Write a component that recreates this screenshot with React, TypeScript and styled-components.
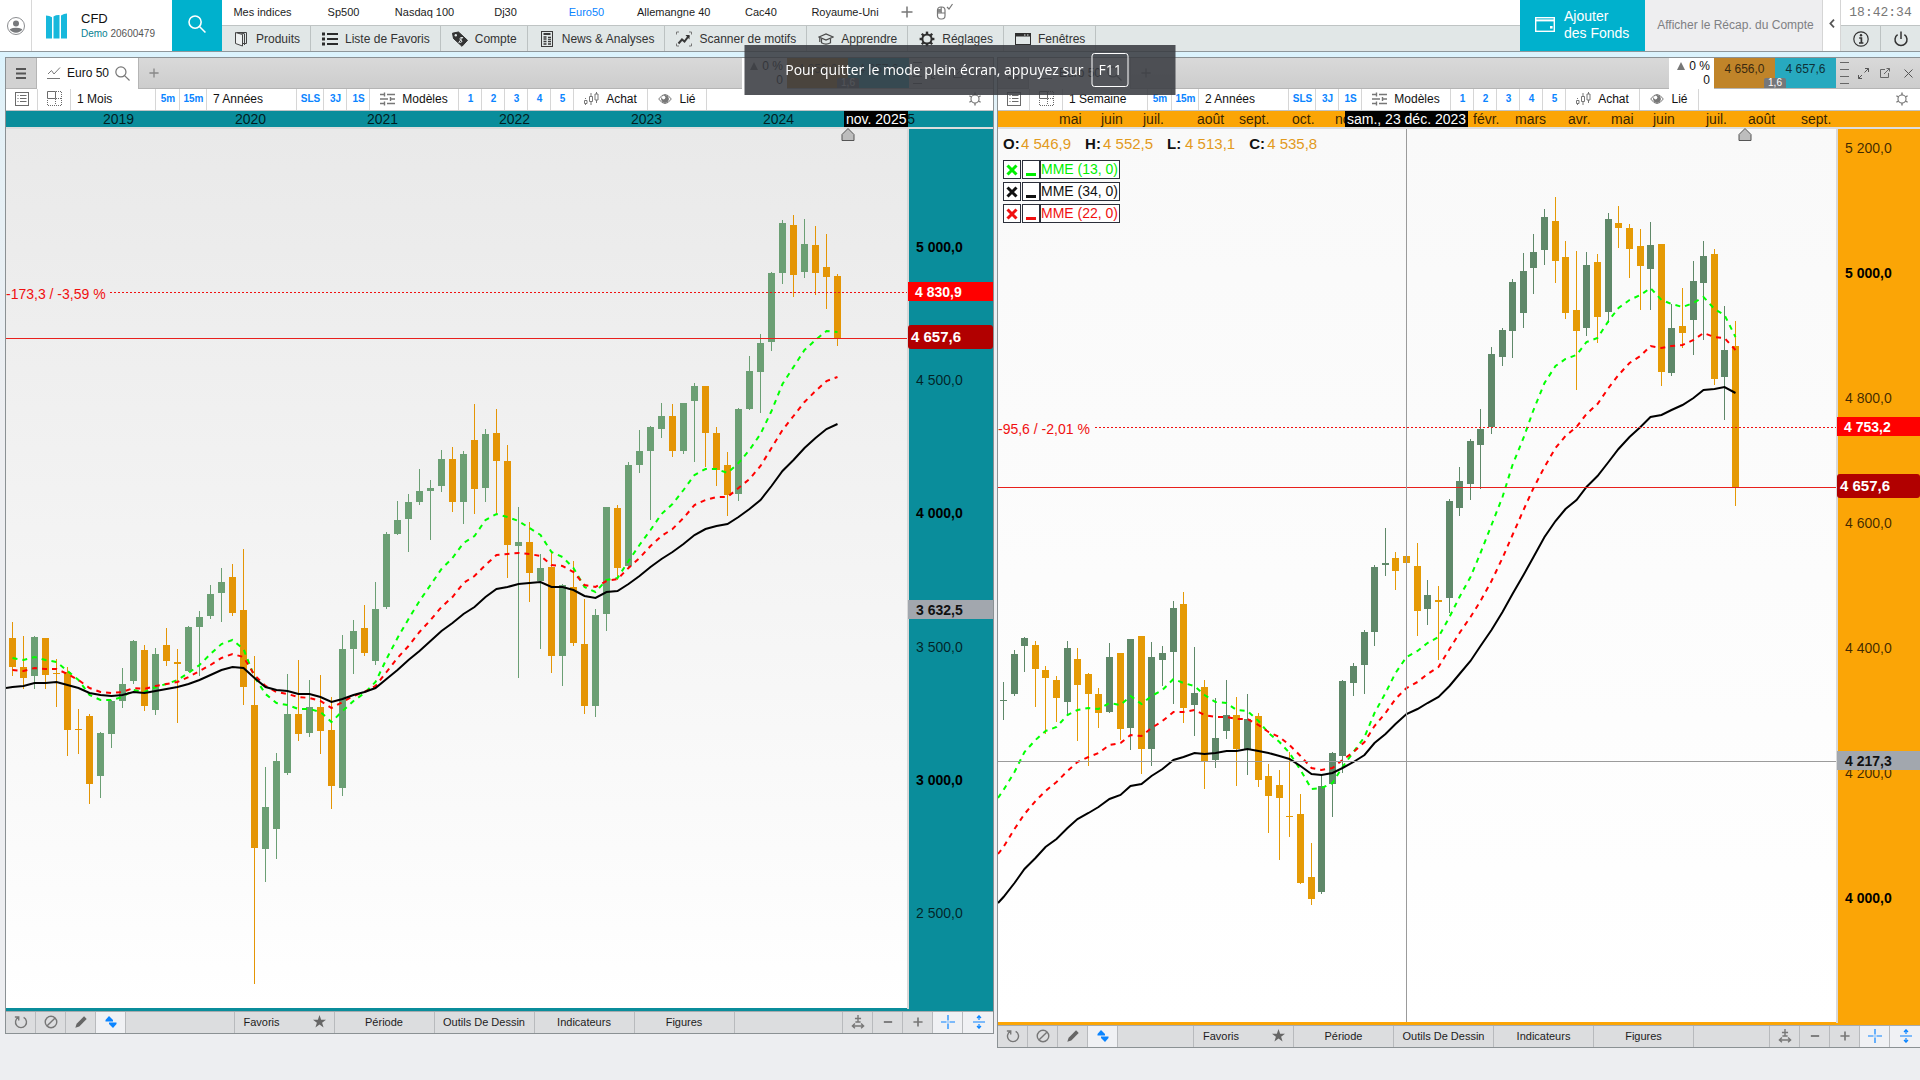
import React from "react";
import styled, { createGlobalStyle, css } from "styled-components";

const TEAL = "#0a8d9b";
const ORANGE = "#fba506";
const CYAN = "#00b1cd";
const BLUE = "#0a84ff";
const FONT = '"Liberation Sans", Arial, sans-serif';

const GlobalStyle = createGlobalStyle`
  *, *::before, *::after { box-sizing: border-box; }
  body {
    margin: 0;
    background: #edeef1;
    font-family: ${FONT};
    font-size: 12px;
    line-height: 14px;
    color: #1c1c1c;
  }
  button {
    margin: 0;
    padding: 0;
    border: 0;
    background: none;
    font: inherit;
    color: inherit;
    white-space: nowrap;
    cursor: pointer;
  }
  svg { display: block; flex: none; }
`;

const Page = styled.div`
  display: flex;
  flex-direction: column;
  min-height: 100vh;
  background: linear-gradient(#dbf3fd 52px, #e4f1f7 120px, #edeef1 420px);
`;

/* ---------- top bar ---------- */

const TopBar = styled.header`
  display: flex;
  height: 52px;
  background: #fff;
  border-bottom: 1px solid #8f979b;
`;

const UserButton = styled.button`
  display: flex;
  align-items: center;
  justify-content: center;
  width: 32px;
  border-right: 1px solid #d8d8d8;
`;

const Brand = styled.div`
  display: flex;
  align-items: center;
  gap: 14px;
  width: 140px;
  padding-left: 14px;
`;

const BrandName = styled.div`
  font-size: 13px;
  line-height: 18px;
  color: #111;
`;

const BrandAccount = styled.div`
  padding-bottom: 2px;
  font-size: 10px;
  line-height: 12px;
  color: #555;

  span {
    color: #087f92;
  }
`;

const SearchButton = styled.button`
  display: flex;
  align-items: center;
  justify-content: center;
  width: 50px;
  padding-bottom: 4px;
  background: ${CYAN};
`;

const Navigation = styled.div`
  display: grid;
  grid-template-rows: 25px 26px;
  flex: 1;
  min-width: 0;
`;

const IndexTabs = styled.nav`
  display: flex;
  align-items: stretch;
  font-size: 11px;
`;

const IndexTab = styled.button<{ $active?: boolean }>`
  min-width: 81px;
  padding: 0 10px 2px;
  color: ${(p) => (p.$active ? BLUE : "#1c1c1c")};
`;

const IconTab = styled.button`
  display: flex;
  align-items: center;
  justify-content: center;
  width: 37px;
  padding-bottom: 1px;
`;

const MenuRow = styled.nav`
  display: flex;
  background: #e1e7e7;
  border-top: 1px solid #bfc4c4;
`;

const MenuItem = styled.button`
  display: flex;
  align-items: center;
  gap: 7px;
  padding: 0 10px 0 11px;
  border-right: 1px solid #bcc2c2;
  color: #333;
`;

const FundsButton = styled.button`
  display: flex;
  align-items: center;
  gap: 9px;
  width: 125px;
  padding: 0 0 2px 15px;
  background: ${CYAN};
  color: #fff;
  font-size: 14px;
  line-height: 17px;
  text-align: left;
`;

const AccountSummary = styled.button`
  width: 177px;
  padding: 0 0 2px 4px;
  background: #eeeef0;
  color: #7e8083;
`;

const CollapseButton = styled.button`
  display: flex;
  align-items: center;
  justify-content: center;
  width: 19px;
  padding-bottom: 4px;
  border-left: 1px solid #d5d5d5;
  border-right: 1px solid #d5d5d5;
`;

const StatusBlock = styled.div`
  display: grid;
  grid-template-rows: 25px 26px;
  width: 79px;
`;

const Clock = styled.time`
  display: flex;
  align-items: center;
  justify-content: center;
  padding-top: 1px;
  font-family: "Liberation Mono", monospace;
  font-size: 13px;
  color: #777;
`;

const StatusButtons = styled.div`
  display: grid;
  grid-template-columns: 1fr 1fr;
  background: #e1e7e7;
  border-top: 1px solid #bfc4c4;
`;

const StatusButton = styled.button`
  display: flex;
  align-items: center;
  justify-content: center;
  padding-left: 2px;
  border-right: 1px solid #bcc2c2;

  &:last-child {
    border-right: 0;
  }
`;

/* ---------- workspace and windows ---------- */

const Workspace = styled.main`
  display: grid;
  grid-template-columns: minmax(0, 989fr) minmax(0, 923fr);
  align-items: start;
  gap: 3px;
  padding: 5px 0 0 5px;
`;

const Window = styled.section<{ $openRight?: boolean }>`
  border: 1px solid #8b9194;
  border-right-width: ${(p) => (p.$openRight ? "0" : "1px")};
  background: #dcdddf;
`;

const TitleBar = styled.div`
  display: flex;
  height: 31px;
  background: linear-gradient(#d9d9d9, #cdcdcd);
  border-bottom: 1px solid #b5b5b5;
`;

const WindowMenu = styled.button`
  display: flex;
  align-items: center;
  justify-content: center;
  width: 31px;
  background: #d2d2d2;
  border-right: 1px solid #b5b5b5;
`;

const ChartTab = styled.div`
  display: flex;
  align-items: center;
  gap: 6px;
  width: 102px;
  height: 31px;
  padding: 0 0 1px 10px;
  background: #fff;
  border-right: 1px solid #b5b5b5;
  color: #111;
`;

const AddTab = styled.button`
  display: flex;
  align-items: center;
  justify-content: center;
  width: 30px;
`;

const TitleSpacer = styled.div`
  flex: 1;
`;

const Variation = styled.div`
  width: 45px;
  height: 31px;
  padding: 1px 4px 0 0;
  background: #fff;
  color: #111;
  text-align: right;
`;

const VariationLine = styled.div`
  display: flex;
  align-items: center;
  justify-content: flex-end;
  gap: 4px;
`;

const Quotes = styled.div`
  position: relative;
  display: flex;
  width: 122px;
`;

const Quote = styled.button<{ $side: "bid" | "ask" }>`
  flex: 1;
  padding-bottom: 8px;
  background: ${(p) => (p.$side === "bid" ? "#c08429" : "#27a9bf")};
  color: ${(p) => (p.$side === "bid" ? "#3a2a10" : "#0e3138")};
`;

const Spread = styled.span`
  position: absolute;
  bottom: 0;
  left: 50%;
  width: 22px;
  margin-left: -11px;
  border-radius: 2px 2px 0 0;
  background: #75777a;
  color: #fff;
  font-size: 10px;
  line-height: 10px;
  text-align: center;
`;

const WindowControls = styled.div`
  display: grid;
  grid-template-columns: 16px 22px 22px 1fr;
  width: 84px;
`;

const ControlButton = styled.button`
  display: flex;
  align-items: center;
  justify-content: center;
`;

const ToolBar = styled.div`
  display: flex;
  height: 22px;
  background: #fff;
  border-bottom: 1px solid #c2c4c6;
`;

const Tool = styled.button<{ $w: number; $kind?: "text" | "short" | "icon" }>`
  display: flex;
  align-items: center;
  justify-content: center;
  gap: 7px;
  width: ${(p) => p.$w}px;
  padding-bottom: 2px;
  border-right: 1px solid #d6d6d6;
  color: #111;
  ${(p) =>
    p.$kind === "text" &&
    css`
      justify-content: flex-start;
      padding-left: 6px;
    `}
  ${(p) =>
    p.$kind === "short" &&
    css`
      padding-left: 1px;
      color: ${BLUE};
      font-size: 10px;
      font-weight: 700;
    `}
`;

const ToolSettings = styled.button`
  display: flex;
  align-items: center;
  margin: 0 11px 0 auto;
  padding-bottom: 1px;
`;

const ChartArea = styled.div`
  position: relative;
`;

const ChartSvg = styled.svg`
  width: 100%;
  height: auto;
  font-family: ${FONT};
  font-size: 14px;
`;

const Legend = styled.div`
  position: absolute;
  top: 24px;
  left: 5px;
`;

const Ohlc = styled.div`
  display: flex;
  gap: 14px;
  margin-bottom: 8px;
  font-size: 15px;
  line-height: 17px;
  color: #e29a1c;
`;

const OhlcItem = styled.span`
  display: flex;
  gap: 1px;

  b {
    min-width: 17px;
    color: #111;
  }
`;

const Indicator = styled.div<{ $color: string }>`
  display: flex;
  height: 19px;
  margin-bottom: 3px;
  color: ${(p) => p.$color};
  font-size: 14px;
  line-height: 17px;
`;

const IndicatorButton = styled.button`
  display: flex;
  align-items: center;
  justify-content: center;
  width: 18px;
  margin-right: 1px;
  border: 1px solid #2b2f3a;
  background: #fff;

  & + & {
    margin-right: 0;
  }
`;

const IndicatorName = styled.span`
  padding-right: 1px;
  border: 1px solid #2b2f3a;
  background: #fff;
`;

const BottomBar = styled.div`
  display: flex;
  height: 21px;
  background: #dcdddf;
  font-size: 11px;
`;

const BottomTool = styled.button<{ $on?: boolean }>`
  display: flex;
  align-items: center;
  justify-content: center;
  width: 30px;
  padding: 0 0 1px 1px;
  background: ${(p) => (p.$on ? "#f0f1f4" : "transparent")};
  border-right: 1px solid #b8babd;

  &:last-child {
    border-right: 0;
  }
`;

const BottomSpacer = styled.div`
  flex: 1;
  border-right: 1px solid #b8babd;
`;

const BottomItem = styled.button<{ $star?: boolean }>`
  display: flex;
  align-items: center;
  justify-content: ${(p) => (p.$star ? "space-between" : "center")};
  width: 100px;
  padding: ${(p) => (p.$star ? "0 8px 2px 9px" : "0 0 2px")};
  border-right: 1px solid #b8babd;
`;

const Toast = styled.div`
  position: fixed;
  top: 45px;
  left: 50%;
  display: flex;
  align-items: center;
  justify-content: center;
  gap: 8px;
  width: 431px;
  height: 50px;
  padding-right: 6px;
  transform: translateX(-50%);
  background: rgba(56, 59, 64, 0.87);
  color: #fff;
  font-family: "Open Sans", "Noto Sans", sans-serif;
  font-size: 14px;
  line-height: 20px;
  white-space: nowrap;
`;

const Key = styled.kbd`
  padding: 6px;
  border: 1px solid #fff;
  border-radius: 3px;
  font: inherit;
`;

/* ---------- icons ---------- */

type IconProps = {
  w?: number;
  h?: number;
  box?: string;
  color?: string;
  sw?: number;
  children: React.ReactNode;
};

const Icon = ({ w = 16, h = 16, box = "0 0 16 16", color = "#777", sw = 1, children }: IconProps) => (
  <svg width={w} height={h} viewBox={box} fill="none" stroke={color} strokeWidth={sw} aria-hidden="true">
    {children}
  </svg>
);

const UserIcon = () => (
  <Icon w={20} h={20} box="0 0 20 20" color="#8b8d90">
    <circle cx="10" cy="10" r="8.5" />
    <circle cx="10" cy="7.5" r="3" fill="#77797c" stroke="none" />
    <path d="M3.6 13.2Q10 10.4 16.4 13.2A7.6 7.6 0 0 1 3.6 13.2Z" fill="#77797c" stroke="none" />
  </Icon>
);

const Logo = () => (
  <Icon w={21} h={26} box="0 0 21 26">
    <g stroke="none" fill="#17b8dc">
      <path d="M0 2.5Q3.5 2.6 6 4.2V25.5H0Z" />
      <path d="M7.5 3.4Q10 1.8 13.5 2V25.5H7.5Z" />
      <path d="M15 2.4Q18 .6 21 .5V25.5H15Z" />
    </g>
  </Icon>
);

const SearchIcon = ({ size, color, sw }: { size: number; color: string; sw: number }) => (
  <Icon w={size} h={size} color={color} sw={sw}>
    <circle cx="6.3" cy="6.3" r="5.4" />
    <path d="M10.2 10.2L15.5 15.5" />
  </Icon>
);

const PlusIcon = ({ size = 12, color = "#777", sw = 1.5 }: { size?: number; color?: string; sw?: number }) => (
  <Icon w={size} h={size} box="0 0 12 12" color={color} sw={sw}>
    <path d="M6 0.5V11.5M0.5 6H11.5" />
  </Icon>
);

const MouseIcon = () => (
  <Icon w={18} h={18} box="0 0 18 18" color="#777" sw={1.2}>
    <rect x="2.5" y="4" width="7.5" height="12" rx="3.2" />
    <path d="M6.2 4V10M2.5 10H10" />
    <path d="M3 6H6V9.6H3Z" fill="#888" stroke="none" />
    <path d="M12 4L14 6L17.5 1" />
  </Icon>
);

const ProductsIcon = () => (
  <Icon color="#444">
    <path d="M3.5 1.5H13.5V12.5H10" />
    <path d="M2.5 1.5L9.5 3.5V15L2.5 12.5Z" fill="#eef1f1" />
    <path d="M5.5 1.5L11.5 2.8V14" />
  </Icon>
);
const ListIcon = () => (
  <Icon color="#2b2b2b" sw={2}>
    <path d="M5 3H16M5 8H16M5 13H16" />
    <path d="M0 3H3M0 8H3M0 13H3" strokeWidth="3" />
  </Icon>
);
const TagIcon = () => (
  <Icon color="#2f2f2f">
    <path d="M.5 2.2L6.5 1L15.5 9.3L10 15.3L1.5 7.5Z" fill="#333" />
    <circle cx="3.8" cy="4.2" r="1.2" fill="#e1e7e7" stroke="none" />
    <path d="M10.5 6.6Q8.6 6 8 7.3T9 9.2T9.6 11Q8.4 12 7 10.8M11 6L6.6 11.6" stroke="#dfe5e5" />
  </Icon>
);
const NewsIcon = () => (
  <Icon color="#3a3a3a">
    <rect x="2.5" y=".5" width="11" height="15" />
    <path d="M4.5 3H11.5" strokeWidth="2" />
    <path d="M4.5 6H7.5M4.5 8H7.5M4.5 10.5H7.5M4.5 13H7.5M9 6.5H12M9 10.5H12M9 13H12" strokeWidth="1.4" />
    <path d="M9 8.4H12" />
  </Icon>
);
const ScannerIcon = () => (
  <Icon color="#3a3a3a">
    <path d="M.5 3.5V1H3M13 1H15.5V3.5M15.5 12.5V15H13M3 15H.5V12.5" stroke="#777" />
    <path d="M2.5 12.5L6 8.5L8.5 10.5L13 4.5" strokeWidth="2" />
    <path d="M9.5 4H13.5V8.5Z" fill="#333" stroke="none" />
  </Icon>
);
const LearnIcon = () => (
  <Icon color="#4a4a4a" sw={1.2}>
    <path d="M1 6L8 3L15 6L8 9Z" />
    <path d="M3.5 7.5V11.8Q8 14.6 12.5 11.8V7.5" />
    <path d="M1.8 6.5V11" />
  </Icon>
);
const GearIcon = ({ size = 16, color = "#2f2f2f", angles }: { size?: number; color?: string; angles?: number[] }) => (
  <Icon w={size} h={size} color={color} sw={angles ? 1.3 : 2}>
    <circle cx="8" cy="8" r="4.6" />
    {(angles ?? [0, 45, 90, 135, 180, 225, 270, 315]).map((a) => (
      <path key={a} d="M8 3.4V.6" strokeWidth={angles ? 1.6 : 2.4} transform={`rotate(${a} 8 8)`} />
    ))}
  </Icon>
);
const WindowIcon = () => (
  <Icon color="#2f2f2f">
    <rect x=".5" y="2.5" width="15" height="11" />
    <path d="M1 4H15" strokeWidth="3" />
    <path d="M9 4H10.5M12 4H13.5" stroke="#e1e7e7" />
  </Icon>
);
const WalletIcon = () => (
  <Icon w={20} h={15} box="0 0 20 15" color="#fff" sw={1.4}>
    <rect x=".7" y=".7" width="18.6" height="13.6" />
    <path d="M1 3.4H19" strokeWidth="2" />
    <path d="M15 9H17.6V11.6H15Z" fill="#fff" stroke="none" />
  </Icon>
);
const InfoIcon = () => (
  <Icon color="#333" sw={1.2}>
    <circle cx="8" cy="8" r="7.2" />
    <path d="M6.2 7H8.4V12M6 12H10.4" strokeWidth="1.7" />
    <circle cx="8" cy="4.2" r="1.2" fill="#333" stroke="none" />
  </Icon>
);
const PowerIcon = () => (
  <Icon color="#333" sw={1.5}>
    <path d="M4.6 3.6A6 6 0 1 0 11.4 3.6" />
    <path d="M8 .5V8" />
  </Icon>
);
const TabChartIcon = () => (
  <Icon w={14} h={14} box="0 0 14 14" color="#777">
    <path d="M1 8L4.5 4.5L7 8L13 1.5M0 12.5H13" />
  </Icon>
);
const ListBoxIcon = () => (
  <Icon w={14} h={14} box="0 0 14 14" color="#6b6b6b">
    <rect x=".5" y=".5" width="13" height="13" />
    <path d="M5 3.5H11.5M5 6.5H11.5M5 9.5H11.5M2.5 3.5H3.5M2.5 6.5H3.5M2.5 9.5H3.5" />
  </Icon>
);
const GridIcon = () => (
  <Icon w={15} h={15} box="0 0 15 15" color="#6b6b6b">
    <path d="M.5 .5H8.5V7.5H.5Z" />
    <path d="M9 .5H14.5V14.5H.5V8M8.5 8V14M9 7.5H14" strokeDasharray="1 1" />
  </Icon>
);
const SlidersIcon = () => (
  <Icon w={15} h={14} box="0 0 15 14" color="#777" sw={1.4}>
    <path d="M0 2.5H4M7 2.5H15M0 7H8M11 7H15M0 11.5H4M7 11.5H15M4.5 .5V4.5M10.5 5V9M4.5 9.5V13.5" />
  </Icon>
);
const CandleIcon = () => (
  <Icon w={15} h={14} box="0 0 15 14" color="#777">
    <path d="M1.5 6V7M1.5 12V13M7 1V4M7 10V13M12.5 0V2M12.5 8V11" />
    <path d="M.5 8.5H3V11.5H.5ZM5.5 4.5H8.5V9.5H5.5ZM11 2H14V8H11Z" />
  </Icon>
);
const EyeIcon = () => (
  <Icon w={14} h={12} box="0 0 14 12" color="#777">
    <path d="M.7 6Q7-3 13.3 6Q7 15 .7 6Z" />
    <circle cx="7" cy="6" r="3.4" fill="#777" />
    <circle cx="5.6" cy="4.6" r="1.8" fill="#fff" stroke="none" />
  </Icon>
);
const BurgerIcon = () => (
  <Icon w={10} h={11} box="0 0 10 11" color="#555" sw={2}>
    <path d="M0 1H10M0 5.5H10M0 10H10" />
  </Icon>
);
const LinesIcon = () => (
  <Icon w={9} h={24} box="0 0 9 24" color="#666">
    <path d="M0 1.5H9M0 8.5H9M0 15.5H9M0 22.5H9" />
  </Icon>
);

/* ---------- chart data ---------- */

type Candle = [kind: "u" | "d", high: number, top: number, bottom: number, low: number];

const parseCandles = (source: string): Candle[] =>
  source
    .trim()
    .split(/\s+/)
    .map((item) => {
      const [kind, ...v] = item.split(",");
      return [kind, ...v.map(Number)] as unknown as Candle;
    });

const monthly = parseCandles(`
d,622,638,667,676 d,636,667,678,689 u,636,637,676,689 d,638,638,675,689 d,659,673,674,707
d,667,672,730,756 d,709,729,730,754 d,714,716,784,804 u,732,733,776,798 u,700,701,734,748
u,668,684,701,708 u,640,641,681,684 d,645,650,706,711 u,648,654,710,715 d,628,645,661,666
d,649,662,664,723 u,626,627,671,672 u,611,617,627,676 u,585,594,616,619 u,568,582,593,622
d,564,577,613,616 d,549,610,687,705 d,656,705,848,984 u,767,807,849,882 u,753,761,829,859
u,674,714,773,775 d,660,714,734,741 u,680,707,733,737 d,675,707,731,754 d,697,730,786,809
u,635,649,788,796 u,620,631,649,674 d,605,628,653,656 u,582,609,661,665 u,532,534,607,609
u,501,520,534,535 u,494,502,519,552 u,469,491,502,505 u,480,488,491,540 u,450,459,486,492
d,447,459,502,512 u,451,454,502,524 d,404,440,489,514 u,429,434,488,502 d,409,433,461,513
d,445,461,545,578 u,507,542,546,678 d,522,542,573,602 u,554,568,581,649 d,552,567,656,673
u,584,585,656,686 d,561,587,643,646 d,599,644,706,714 u,609,615,706,717 u,507,507,614,631
d,505,508,568,580 u,462,465,566,568 u,430,451,465,473 u,426,427,451,520 u,403,416,429,438
d,404,416,451,457 u,403,403,451,454 u,383,386,401,462 d,386,386,433,467 d,427,433,470,486
d,452,465,495,516 u,408,409,494,501 u,356,371,409,410 u,334,343,372,413 u,272,273,342,351
u,220,223,273,284 d,215,225,275,297 u,219,244,272,278 d,226,245,273,295 d,234,267,277,309
d,274,276,338,346
`);

const monthlyAverages = {
  slow: [
    687, 686, 683, 683, 682, 685, 688, 693, 695, 696, 695, 692, 693, 691, 689, 687, 684, 680, 675, 670, 667, 668, 678,
    687, 690, 691, 694, 694, 697, 702, 699, 695, 692, 688, 679, 670, 660, 651, 641, 631, 623, 614, 607, 597, 589, 587,
    584, 583, 582, 587, 587, 590, 596, 598, 592, 591, 584, 576, 567, 559, 552, 544, 535, 529, 526, 524, 517, 509, 500,
    486, 471, 460, 448, 438, 429, 424,
  ],
  middle: [
    670, 671, 668, 669, 669, 674, 680, 688, 692, 693, 692, 688, 689, 686, 684, 682, 677, 671, 665, 658, 654, 657, 675,
    686, 692, 694, 697, 698, 701, 708, 702, 696, 692, 686, 672, 658, 646, 632, 620, 607, 597, 583, 576, 565, 555, 554,
    553, 554, 556, 565, 566, 572, 585, 587, 581, 579, 568, 558, 546, 536, 529, 518, 505, 500, 497, 497, 488, 479, 466,
    448, 430, 416, 402, 391, 381, 377,
  ],
  fast: [
    658, 660, 657, 660, 662, 671, 680, 695, 700, 700, 697, 690, 692, 687, 684, 680, 673, 665, 654, 644, 640, 649, 677,
    694, 703, 705, 709, 709, 712, 722, 711, 701, 693, 682, 659, 638, 619, 601, 585, 569, 558, 543, 536, 520, 514, 517,
    521, 528, 535, 552, 557, 568, 587, 592, 580, 578, 561, 545, 530, 514, 504, 490, 475, 469, 469, 473, 463, 450, 434,
    411, 384, 367, 350, 340, 331, 332,
  ],
};

const weekly = parseCandles(`
u,682,700,701,720 u,650,654,694,696 u,637,638,646,672 d,641,645,669,707 d,666,670,678,734
d,676,680,698,722 u,641,648,702,715 d,648,659,685,741 d,673,674,694,766 d,688,694,713,728
u,643,657,712,713 d,653,653,729,740 u,639,639,728,750 d,636,636,749,774 u,642,657,749,766
u,646,653,660,686 u,601,608,652,704 d,592,604,708,723 u,647,693,705,736 d,680,687,761,789
u,698,738,760,768 u,680,715,731,739 d,697,715,749,786 u,694,719,749,775 d,713,716,780,787
d,764,776,796,833 d,770,785,798,860 d,752,816,817,837 d,794,814,883,884 d,843,877,899,905
u,775,786,892,894 u,752,753,784,817 u,680,681,756,773 u,663,666,683,696 u,630,632,665,694
u,565,567,632,646 u,528,563,565,576 d,552,558,571,590 d,556,556,563,563 d,543,566,611,636
u,580,595,609,625 d,586,600,602,660 u,499,501,598,613 u,467,481,508,516 u,439,441,484,500
u,409,429,445,489 u,347,354,427,434 u,328,330,357,366 u,279,282,331,358 u,253,271,313,328
u,234,252,268,294 u,209,217,250,265 d,197,221,261,283 d,241,257,313,319 d,251,310,331,390
u,252,265,328,336 d,254,262,317,343 u,213,219,312,323 d,206,223,228,248 d,224,228,249,278
d,229,246,266,310 u,222,245,269,310 d,244,244,372,386 u,304,328,373,376 d,288,326,333,348
u,261,281,320,355 u,241,256,283,340 d,249,254,379,385 u,306,350,377,420 d,321,346,487,506
`);

const weeklyAverages = {
  slow: [
    897, 883, 869, 858, 847, 839, 828, 819, 813, 807, 799, 795, 786, 784, 776, 769, 760, 757, 753, 754, 753, 751, 751,
    749, 751, 753, 756, 759, 766, 774, 775, 773, 768, 762, 755, 743, 734, 724, 714, 709, 703, 697, 686, 674, 661, 646,
    630, 612, 594, 575, 557, 537, 521, 509, 500, 487, 476, 462, 449, 437, 427, 417, 415, 410, 405, 398, 390, 389, 387,
    393,
  ],
  middle: [
    847, 829, 814, 801, 791, 782, 771, 762, 757, 753, 745, 743, 735, 736, 728, 721, 712, 712, 710, 715, 717, 717, 719,
    719, 725, 732, 737, 745, 756, 768, 770, 768, 760, 752, 742, 726, 713, 699, 688, 682, 674, 667, 649, 633, 617, 601,
    581, 558, 535, 510, 488, 467, 448, 436, 427, 414, 404, 388, 375, 363, 356, 346, 348, 346, 345, 340, 333, 337, 338,
    350,
  ],
  fast: [
    790, 772, 752, 740, 731, 727, 715, 710, 708, 709, 703, 705, 696, 704, 696, 690, 679, 683, 686, 695, 702, 703, 710,
    711, 721, 733, 742, 753, 770, 789, 788, 783, 767, 752, 737, 713, 693, 673, 657, 651, 643, 637, 617, 597, 577, 553,
    525, 497, 465, 438, 410, 383, 366, 359, 355, 342, 338, 321, 308, 300, 295, 288, 300, 304, 307, 303, 297, 309, 315,
    337,
  ],
};

type Label = [text: string, position: number];

type ChartSpec = {
  id: string;
  label: string;
  left: number;
  right: number;
  plotRight: number;
  plotBottom: number;
  axisColor: string;
  up: string;
  down: string;
  shade: [string, string];
  firstX: number;
  step: number;
  candles: Candle[];
  averages: { slow: number[]; middle: number[]; fast: number[] };
  lead: { slow: number; middle?: number; fast?: number };
  times: Label[];
  timeCursor: { text: string; x: number; width: number };
  marker: number;
  prices: Label[];
  delta: { text: string; line: number; from: number; price: string };
  last: { line: number; price: string };
  cursor: { price: string; y: number; x?: number };
};

const leftChart: ChartSpec = {
  id: "monthly",
  label: "Euro 50, 1 Mois",
  left: 6,
  right: 993,
  plotRight: 907,
  plotBottom: 1008,
  axisColor: TEAL,
  up: "#6b9f74",
  down: "#e49505",
  shade: ["#e9e9e9", "#ffffff"],
  firstX: 12,
  step: 11,
  candles: monthly,
  averages: monthlyAverages,
  lead: { slow: 688 },
  times: [
    ["2019", 103],
    ["2020", 235],
    ["2021", 367],
    ["2022", 499],
    ["2023", 631],
    ["2024", 763],
    ["2025", 884],
  ],
  timeCursor: { text: "nov. 2025", x: 844, width: 64 },
  marker: 848,
  prices: [
    ["5 000,0", 247],
    ["4 500,0", 380],
    ["4 000,0", 513],
    ["3 500,0", 647],
    ["3 000,0", 780],
    ["2 500,0", 913],
  ],
  delta: { text: "-173,3 / -3,59 %", line: 292, from: 110, price: "4 830,9" },
  last: { line: 338, price: "4 657,6" },
  cursor: { price: "3 632,5", y: 610 },
};

const rightChart: ChartSpec = {
  id: "weekly",
  label: "Euro 50, 1 Semaine",
  left: 998,
  right: 1920,
  plotRight: 1836,
  plotBottom: 1022,
  axisColor: ORANGE,
  up: "#5f8869",
  down: "#e59a05",
  shade: ["#f9f9f9", "#ffffff"],
  firstX: 1003.4,
  step: 10.61,
  candles: weekly,
  averages: weeklyAverages,
  lead: { slow: 903, middle: 854, fast: 798 },
  times: [
    ["mai", 1059],
    ["juin", 1101],
    ["juil.", 1143],
    ["août", 1197],
    ["sept.", 1239],
    ["oct.", 1292],
    ["nov.", 1335],
    ["févr.", 1473],
    ["mars", 1515],
    ["avr.", 1568],
    ["mai", 1611],
    ["juin", 1653],
    ["juil.", 1706],
    ["août", 1748],
    ["sept.", 1801],
  ],
  timeCursor: { text: "sam., 23 déc. 2023", x: 1345, width: 123 },
  marker: 1745,
  prices: [
    ["5 200,0", 148],
    ["5 000,0", 273],
    ["4 800,0", 398],
    ["4 600,0", 523],
    ["4 400,0", 648],
    ["4 200,0", 773],
    ["4 000,0", 898],
  ],
  delta: { text: "-95,6 / -2,01 %", line: 427, from: 1095, price: "4 753,2" },
  last: { line: 487, price: "4 657,6" },
  cursor: { price: "4 217,3", y: 761, x: 1406 },
};

const isMajor = (text: string) => /^\d 000/.test(text);

const TOP = 111;
const PLOT_TOP = 129;

const PriceChart = ({ spec }: { spec: ChartSpec }) => {
  const bottom = spec.plotBottom + 4;
  const axisLeft = spec.plotRight + 2;
  const labelX = axisLeft + 7;
  const centre = (i: number) => Math.floor(spec.firstX + spec.step * i) + 0.5;
  const points = (ys: number[], lead?: number) =>
    [...(lead === undefined ? [] : [`${spec.left},${lead}`]), ...ys.map((y, i) => `${centre(i)},${y}`)].join(" ");

  return (
    <ChartSvg
      viewBox={`${spec.left} ${TOP} ${spec.right - spec.left} ${bottom - TOP}`}
      role="img"
      aria-label={spec.label}
    >
      <defs>
        <linearGradient id={spec.id} x1="0" y1="0" x2="0" y2="1">
          <stop offset="0" stopColor={spec.shade[0]} />
          <stop offset="1" stopColor={spec.shade[1]} />
        </linearGradient>
      </defs>
      <rect x={spec.left} y={TOP} width={spec.right - spec.left} height={bottom - TOP} fill={spec.axisColor} />
      <rect
        x={spec.left}
        y={PLOT_TOP}
        width={spec.plotRight - spec.left}
        height={spec.plotBottom - PLOT_TOP}
        fill={`url(#${spec.id})`}
      />
      <rect x={spec.left} y={PLOT_TOP - 2} width={spec.right - spec.left} height={2} fill="#dddddd" />
      <rect x={spec.plotRight} y={PLOT_TOP} width={2} height={spec.plotBottom - PLOT_TOP + 1} fill="#d9d9d9" />
      <rect x={spec.left} y={bottom - 1} width={spec.right - spec.left} height={1} fill="#a7abae" />

      <g shapeRendering="crispEdges">
        {spec.candles.map(([kind, high, top, low, end], i) => {
          const fill = kind === "u" ? spec.up : spec.down;
          const x = centre(i);
          return (
            <g key={i} fill={fill}>
              <rect x={x - 0.5} y={high} width={1} height={end - high} />
              <rect x={x - 3.5} y={top} width={7} height={Math.max(1, low - top)} />
            </g>
          );
        })}
      </g>

      <g fill="none" strokeWidth={2}>
        <polyline points={points(spec.averages.fast, spec.lead.fast)} stroke="#00ff00" strokeDasharray="5 5" />
        <polyline points={points(spec.averages.middle, spec.lead.middle)} stroke="#ff0000" strokeDasharray="5 5" />
        <polyline points={points(spec.averages.slow, spec.lead.slow)} stroke="#000" />
      </g>

      <g shapeRendering="crispEdges">
        <line
          x1={spec.delta.from}
          x2={spec.plotRight}
          y1={spec.delta.line + 0.5}
          y2={spec.delta.line + 0.5}
          stroke="#f01010"
          strokeDasharray="2 2"
        />
        <rect x={spec.left} y={spec.last.line} width={spec.plotRight - spec.left} height={1} fill="#e8201c" />
        {spec.cursor.x !== undefined && (
          <>
            <rect x={spec.cursor.x} y={PLOT_TOP} width={1} height={spec.plotBottom - PLOT_TOP} fill="#9b9b9b" />
            <rect x={spec.left} y={spec.cursor.y} width={spec.plotRight - spec.left} height={1} fill="#9b9b9b" />
          </>
        )}
      </g>
      <text x={spec.left} y={spec.delta.line + 7} fill="#f01010">
        {spec.delta.text}
      </text>

      <g fill="#000" fillOpacity={0.8}>
        {spec.times.map(([text, x], i) => (
          <text key={i} x={x} y={124}>
            {text}
          </text>
        ))}
      </g>
      <rect x={spec.timeCursor.x} y={TOP} width={spec.timeCursor.width} height={16} fill="#000" />
      <text x={spec.timeCursor.x + 2} y={124} fill="#fff">
        {spec.timeCursor.text}
      </text>
      <path
        d={`M${spec.marker} 128.5L${spec.marker + 6} 134.5V140.5H${spec.marker - 6}V134.5Z`}
        fill="#bdbdbd"
        stroke="#555"
      />

      {spec.prices.map(([text, y]) => (
        <text
          key={text}
          x={labelX}
          y={y + 5}
          fill="#000"
          fillOpacity={isMajor(text) ? 1 : 0.75}
          fontWeight={isMajor(text) ? 700 : 400}
        >
          {text}
        </text>
      ))}
      <g fontWeight={700}>
        <rect x={axisLeft - 1} y={spec.cursor.y - 10} width={spec.right - axisLeft + 1} height={19} fill="#a2a7ae" />
        <text x={labelX} y={spec.cursor.y + 5} fill="#111">
          {spec.cursor.price}
        </text>
        <rect x={axisLeft - 1} y={spec.delta.line - 10} width={spec.right - axisLeft + 1} height={19} fill="#ff0000" />
        <text x={labelX - 1} y={spec.delta.line + 5} fill="#fff">
          {spec.delta.price}
        </text>
        <rect
          x={axisLeft - 1}
          y={spec.last.line - 13}
          width={spec.right - axisLeft + 1}
          height={24}
          rx={3}
          fill="#b10000"
        />
        <text x={labelX - 5} y={spec.last.line + 4} fill="#fff" fontSize={15}>
          {spec.last.price}
        </text>
      </g>
    </ChartSvg>
  );
};

/* ---------- window ---------- */

const ohlc: [string, string][] = [
  ["O:", "4 546,9"],
  ["H:", "4 552,5"],
  ["L:", "4 513,1"],
  ["C:", "4 535,8"],
];

const indicators: [string, string][] = [
  ["MME (13, 0)", "#00f000"],
  ["MME (34, 0)", "#111111"],
  ["MME (22, 0)", "#f01010"],
];

const ChartLegend = () => (
  <Legend>
    <Ohlc>
      {ohlc.map(([name, value]) => (
        <OhlcItem key={name}>
          <b>{name}</b>
          {value}
        </OhlcItem>
      ))}
    </Ohlc>
    {indicators.map(([name, color]) => (
      <Indicator key={name} $color={color}>
        <IndicatorButton aria-label={`Supprimer ${name}`}>
          <Icon w={12} h={12} box="0 0 12 12" color="currentColor" sw={3}>
            <path d="M1.5 1.5L10.5 10.5M10.5 1.5L1.5 10.5" />
          </Icon>
        </IndicatorButton>
        <IndicatorButton aria-label={`Réduire ${name}`}>
          <Icon w={12} h={12} box="0 0 12 12" color="currentColor" sw={3}>
            <path d="M1 10.5H11" />
          </Icon>
        </IndicatorButton>
        <IndicatorName>{name}</IndicatorName>
      </Indicator>
    ))}
  </Legend>
);

type WindowProps = {
  spec: ChartSpec;
  period: string;
  range: string;
  legend?: boolean;
  openRight?: boolean;
};

const ChartWindow = ({ spec, period, range, legend, openRight }: WindowProps) => (
  <Window $openRight={openRight}>
    <TitleBar>
      <WindowMenu aria-label="Menu">
        <BurgerIcon />
      </WindowMenu>
      <ChartTab>
        <TabChartIcon />
        Euro 50
        <SearchIcon size={15} color="#777" sw={1.3} />
      </ChartTab>
      <AddTab aria-label="Nouvel onglet">
        <PlusIcon size={10} color="#888" sw={1.6} />
      </AddTab>
      <TitleSpacer />
      <Variation>
        <VariationLine>
          <Icon w={8} h={8} box="0 0 8 8">
            <path d="M4 0L8 8H0Z" fill="#777" stroke="none" />
          </Icon>
          0 %
        </VariationLine>
        <VariationLine>0</VariationLine>
      </Variation>
      <Quotes>
        <Quote $side="bid">4 656,0</Quote>
        <Quote $side="ask">4 657,6</Quote>
        <Spread>1,6</Spread>
      </Quotes>
      <WindowControls>
        <ControlButton aria-label="Options">
          <LinesIcon />
        </ControlButton>
        <ControlButton aria-label="Agrandir">
          <Icon w={11} h={11} box="0 0 11 11" color="#555">
            <path d="M6.5 4.5L10.5 .5M7 .5H10.5V4M4 7L.5 10.5M.5 7V10.5H4" />
          </Icon>
        </ControlButton>
        <ControlButton aria-label="Détacher">
          <Icon w={10} h={10} box="0 0 10 10" color="#666">
            <path d="M5 1.5H.5V9.5H8.5V5M4 6L9.5 .5M6.5 .5H9.5V3.5" />
          </Icon>
        </ControlButton>
        <ControlButton aria-label="Fermer">
          <Icon w={9} h={9} box="0 0 9 9" color="#555">
            <path d="M.5 .5L8.5 8.5M8.5 .5L.5 8.5" />
          </Icon>
        </ControlButton>
      </WindowControls>
    </TitleBar>

    <ToolBar>
      <Tool $w={32} aria-label="Liste">
        <ListBoxIcon />
      </Tool>
      <Tool $w={33} aria-label="Disposition">
        <GridIcon />
      </Tool>
      <Tool $w={85} $kind="text">
        {period}
      </Tool>
      <Tool $w={24} $kind="short">
        5m
      </Tool>
      <Tool $w={27} $kind="short">
        15m
      </Tool>
      <Tool $w={90} $kind="text">
        {range}
      </Tool>
      <Tool $w={27} $kind="short">
        SLS
      </Tool>
      <Tool $w={23} $kind="short">
        3J
      </Tool>
      <Tool $w={23} $kind="short">
        1S
      </Tool>
      <Tool $w={89}>
        <SlidersIcon />
        Modèles
      </Tool>
      {["1", "2", "3", "4", "5"].map((n) => (
        <Tool key={n} $w={23} $kind="short">
          {n}
        </Tool>
      ))}
      <Tool $w={74}>
        <CandleIcon />
        Achat
      </Tool>
      <Tool $w={59}>
        <EyeIcon />
        Lié
      </Tool>
      <ToolSettings aria-label="Paramètres">
        <GearIcon size={14} color="#777" angles={[0, 60, 120, 180, 240, 300]} />
      </ToolSettings>
    </ToolBar>

    <ChartArea>
      <PriceChart spec={spec} />
      {legend && <ChartLegend />}
    </ChartArea>

    <BottomBar>
      <BottomTool aria-label="Actualiser">
        <Icon w={14} h={14} sw={1.6}>
          <path d="M5 2.6A6.3 6.3 0 1 0 11 2.6M1 2.2H5.4V6.4" />
        </Icon>
      </BottomTool>
      <BottomTool aria-label="Masquer">
        <Icon w={14} h={14} sw={1.6}>
          <circle cx="8" cy="8" r="6.6" />
          <path d="M3.6 12.4L12.4 3.6" />
        </Icon>
      </BottomTool>
      <BottomTool aria-label="Dessiner">
        <Icon w={14} h={14}>
          <path d="M1.5 14.5L3 10L11.5 1.5L14.5 4.5L6 13Z" fill="#666" stroke="none" />
        </Icon>
      </BottomTool>
      <BottomTool $on aria-label="Ajuster">
        <Icon w={12} h={12} box="0 0 12 12">
          <path d="M4 0L8 4V5.5H.5V4ZM8 12L4 8V6.5H11.5V8Z" fill={BLUE} stroke="none" />
        </Icon>
      </BottomTool>
      <BottomSpacer />
      <BottomItem $star>
        Favoris
        <Icon w={13} h={13}>
          <path d="M8 0L10 5.8H16L11.2 9.4L13 15.5L8 11.8L3 15.5L4.8 9.4L0 5.8H6Z" fill="#666" stroke="none" />
        </Icon>
      </BottomItem>
      <BottomItem>Période</BottomItem>
      <BottomItem>Outils De Dessin</BottomItem>
      <BottomItem>Indicateurs</BottomItem>
      <BottomItem>Figures</BottomItem>
      <BottomSpacer />
      <BottomTool aria-label="Échelle">
        <Icon w={14} h={14} sw={1.6}>
          <path d="M8 0V8M4.5 4H11.5M5 8H11M2 12.5H14M4.5 9.8L1.6 12.5L4.5 15.2M11.5 9.8L14.4 12.5L11.5 15.2" />
        </Icon>
      </BottomTool>
      <BottomTool aria-label="Zoom arrière">
        <Icon w={10} h={10} box="0 0 12 12" sw={2.2}>
          <path d="M1 6H11" />
        </Icon>
      </BottomTool>
      <BottomTool aria-label="Zoom avant">
        <PlusIcon size={10} sw={2} />
      </BottomTool>
      <BottomTool $on aria-label="Curseur">
        <Icon w={14} h={14} box="0 0 14 14" color={BLUE} sw={1.2}>
          <path d="M7 0V5.5M7 8.5V14M0 7H5.5M8.5 7H14M6.5 7H7.5" />
        </Icon>
      </BottomTool>
      <BottomTool $on aria-label="Séparer">
        <Icon w={14} h={14} box="0 0 14 14" color={BLUE} sw={1.2}>
          <path d="M1 7H13M7 5V1M5 3L7 .8L9 3M7 9V13M5 11L7 13.2L9 11" />
        </Icon>
      </BottomTool>
    </BottomBar>
  </Window>
);

/* ---------- page ---------- */

const indices = [
  "Mes indices",
  "Sp500",
  "Nasdaq 100",
  "Dj30",
  "Euro50",
  "Allemangne 40",
  "Cac40",
  "Royaume-Uni",
];

const menu: [string, React.ReactNode][] = [
  ["Produits", <ProductsIcon />],
  ["Liste de Favoris", <ListIcon />],
  ["Compte", <TagIcon />],
  ["News & Analyses", <NewsIcon />],
  ["Scanner de motifs", <ScannerIcon />],
  ["Apprendre", <LearnIcon />],
  ["Réglages", <GearIcon />],
  ["Fenêtres", <WindowIcon />],
];

export default function App() {
  return (
    <Page>
      <GlobalStyle />
      <TopBar>
        <UserButton aria-label="Profil">
          <UserIcon />
        </UserButton>
        <Brand>
          <Logo />
          <div>
            <BrandName>CFD</BrandName>
            <BrandAccount>
              <span>Demo</span> 20600479
            </BrandAccount>
          </div>
        </Brand>
        <SearchButton aria-label="Rechercher">
          <SearchIcon size={18} color="#fff" sw={1.4} />
        </SearchButton>
        <Navigation>
          <IndexTabs>
            {indices.map((name) => (
              <IndexTab key={name} $active={name === "Euro50"}>
                {name}
              </IndexTab>
            ))}
            <IconTab aria-label="Ajouter une liste">
              <PlusIcon />
            </IconTab>
            <IconTab aria-label="Souris">
              <MouseIcon />
            </IconTab>
          </IndexTabs>
          <MenuRow>
            {menu.map(([name, icon]) => (
              <MenuItem key={name}>
                {icon}
                {name}
              </MenuItem>
            ))}
          </MenuRow>
        </Navigation>
        <FundsButton>
          <WalletIcon />
          <span>
            Ajouter
            <br />
            des Fonds
          </span>
        </FundsButton>
        <AccountSummary>Afficher le Récap. du Compte</AccountSummary>
        <CollapseButton aria-label="Replier">
          <Icon w={6} h={9} box="0 0 6 9" color="#555" sw={1.8}>
            <path d="M5 .7L1.4 4.5L5 8.3" />
          </Icon>
        </CollapseButton>
        <StatusBlock>
          <Clock>18:42:34</Clock>
          <StatusButtons>
            <StatusButton aria-label="Informations">
              <InfoIcon />
            </StatusButton>
            <StatusButton aria-label="Déconnexion">
              <PowerIcon />
            </StatusButton>
          </StatusButtons>
        </StatusBlock>
      </TopBar>

      <Workspace>
        <ChartWindow spec={leftChart} period="1 Mois" range="7 Années" />
        <ChartWindow spec={rightChart} period="1 Semaine" range="2 Années" legend openRight />
      </Workspace>

      <Toast role="status">
        Pour quitter le mode plein écran, appuyez sur
        <Key>F11</Key>
      </Toast>
    </Page>
  );
}
